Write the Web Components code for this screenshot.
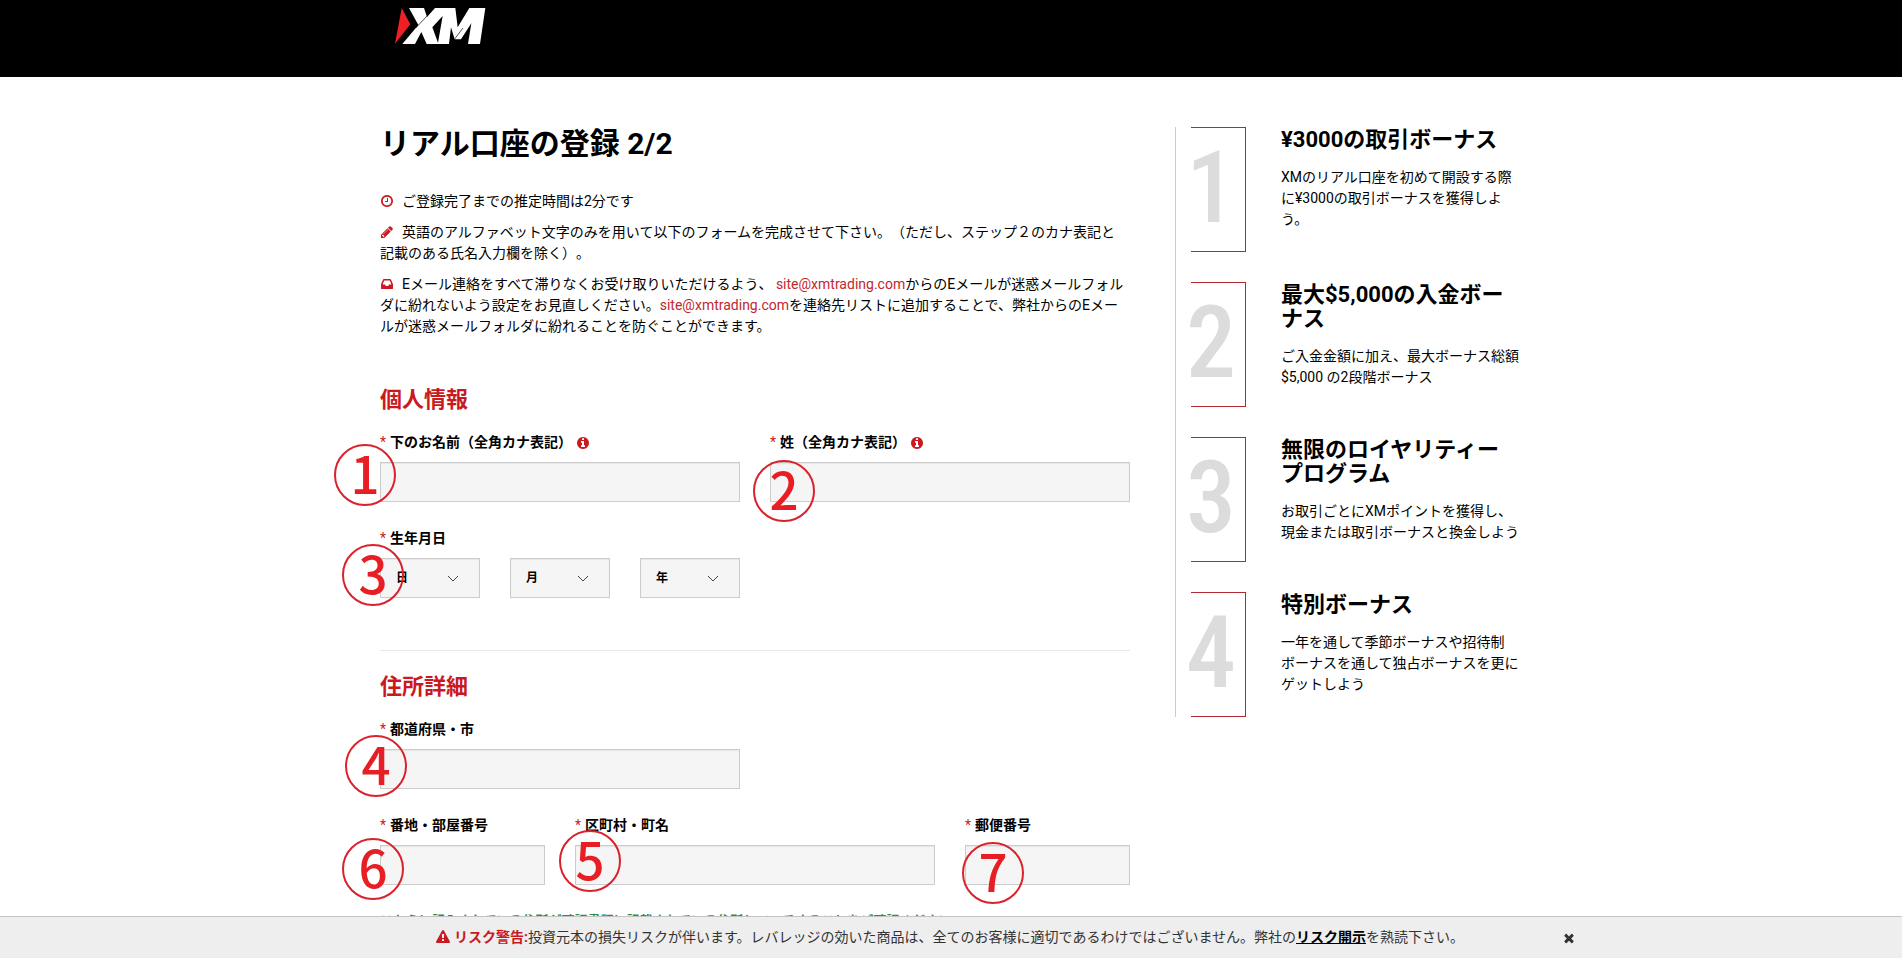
<!DOCTYPE html>
<html lang="ja">
<head>
<meta charset="utf-8">
<title>リアル口座の登録</title>
<style>
  body {
    margin: 0;
    background: #fff;
    color: #000;
    font: 14px/21px Roboto, "Noto Sans CJK JP", sans-serif;
    text-spacing-trim: space-all;
    line-break: strict;
  }
</style>
</head>
<body>
<xm-header></xm-header>
<xm-layout>
  <xm-intro></xm-intro>
  <xm-section heading="個人情報">
    <div class="row halves">
      <xm-field label="下のお名前（全角カナ表記）" info style="--mx:-46px;--my:13px" mark="1"></xm-field>
      <xm-field label="姓（全角カナ表記）" info style="--mx:-17px;--my:29px" mark="2"></xm-field>
    </div>
    <div class="row halves">
      <xm-birthdate style="--mx:-38px;--my:17px"></xm-birthdate>
    </div>
  </xm-section>
  <xm-section heading="住所詳細" divided>
    <div class="row halves">
      <xm-field label="都道府県・市" style="--mx:-35px;--my:17px" mark="4"></xm-field>
    </div>
    <div class="row address">
      <xm-field label="番地・部屋番号" style="--mx:-38px;--my:24px" mark="6"></xm-field>
      <xm-field label="区町村・町名" style="--mx:-16px;--my:16px" mark="5"></xm-field>
      <xm-field label="郵便番号" style="--mx:-3px;--my:28px" mark="7"></xm-field>
    </div>
    <p class="hint">こちらに記入されている住所が確認書類に記載されている住所とマッチすることをご確認ください</p>
  </xm-section>
  <xm-benefit slot="aside" number="1"><span slot="title">¥3000の取引ボーナス</span>XMのリアル口座を初めて開設する際に¥3000の取引ボーナスを獲得しよう。</xm-benefit>
  <xm-benefit slot="aside" number="2"><span slot="title">最大$5,000の入金ボーナス</span>ご入金金額に加え、最大ボーナス総額$5,000 の2段階ボーナス</xm-benefit>
  <xm-benefit slot="aside" number="3"><span slot="title">無限のロイヤリティープログラム</span>お取引ごとにXMポイントを獲得し、現金または取引ボーナスと換金しよう</xm-benefit>
  <xm-benefit slot="aside" number="4"><span slot="title">特別ボーナス</span>一年を通して季節ボーナスや招待制ボーナスを通して独占ボーナスを更にゲットしよう</xm-benefit>
</xm-layout>
<xm-risk-bar></xm-risk-bar>

<style>
  .row { display: grid; gap: 30px; margin-bottom: 25px; }
  .halves { grid-template-columns: 1fr 1fr; }
  .address { grid-template-columns: 165fr 360fr 165fr; }
  .hint { margin: 0; font-size: 13px; font-weight: 700; color: #2f8f46; }
</style>

<script>
const ICONS = {
  clock: 'M1024 544v448q0 14-9 23t-23 9h-320q-14 0-23-9t-9-23v-64q0-14 9-23t23-9h224v-352q0-14 9-23t23-9h64q14 0 23 9t9 23zm416 352q0-148-73-273t-198-198-273-73-273 73-198 198-73 273 73 273 198 198 273 73 273-73 198-198 73-273zm224 0q0 209-103 385.5t-279.5 279.5-385.5 103-385.5-103-279.5-279.5-103-385.5 103-385.5 279.5-279.5 385.5-103 385.5 103 279.5 279.5 103 385.5z',
  pencil: 'M491 1536l91-91-235-235-91 91v107h128v128h107zm523-928q0-22-22-22-10 0-17 7l-542 542q-7 7-7 17 0 22 22 22 10 0 17-7l542-542q7-7 7-17zm-54-192l416 416-832 832h-416v-416zm683 96q0 53-37 90l-166 166-416-416 166-165q36-38 90-38 53 0 91 38l235 234q37 39 37 91z',
  inbox: 'M1151 960h316q-1-3-2.5-8t-2.5-8l-212-496h-708l-212 496q-1 2-2.5 8t-2.5 8h316l95 192h320zm513 30v482q0 26-19 45t-45 19h-1408q-26 0-45-19t-19-45v-482q0-62 25-123l238-552q10-25 36.5-42t52.5-17h832q26 0 52.5 17t36.5 42l238 552q25 61 25 123z',
  info: 'M1152 1376v-160q0-14-9-23t-23-9h-96v-512q0-14-9-23t-23-9h-320q-14 0-23 9t-9 23v160q0 14 9 23t23 9h96v320h-96q-14 0-23 9t-9 23v160q0 14 9 23t23 9h448q14 0 23-9t9-23zm-128-896v-160q0-14-9-23t-23-9h-192q-14 0-23 9t-9 23v160q0 14 9 23t23 9h192q14 0 23-9t9-23zm640 416q0 209-103 385.5t-279.5 279.5-385.5 103-385.5-103-279.5-279.5-103-385.5 103-385.5 279.5-279.5 385.5-103 385.5 103 279.5 279.5 103 385.5z',
  warning: 'M1024 1375v-190q0-14-9.5-23.5t-22.5-9.5h-192q-13 0-22.5 9.5t-9.5 23.5v190q0 14 9.5 23.5t22.5 9.5h192q13 0 22.5-9.5t9.5-23.5zm-2-374l18-459q0-12-10-19-13-11-24-11h-220q-11 0-24 11-10 7-10 21l17 457q0 10 10 16.5t24 6.5h185q14 0 23.5-6.5t10.5-16.5zm-14-934l768 1408q35 63-2 126-17 29-46.5 46t-63.5 17h-1536q-34 0-63.5-17t-46.5-46q-37-63-2-126l768-1408q17-31 47-49t65-18 65 18 47 49z',
  close: 'M1490 1322q0 40-28 68l-136 136q-28 28-68 28t-68-28l-294-294-294 294q-28 28-68 28t-68-28l-136-136q-28-28-28-68t28-68l294-294-294-294q-28-28-28-68t28-68l136-136q28-28 68-28t68 28l294 294 294-294q28-28 68-28t68 28l136 136q28 28 28 68t-28 68l-294 294 294 294q28 28 28 68z'
};

class Base extends HTMLElement {
  constructor() { super(); this.attachShadow({ mode: 'open' }); }
  connectedCallback() { this.shadowRoot.innerHTML = this.render(); }
}

customElements.define('xm-icon', class extends Base {
  render() {
    return `<style>
      :host { display: inline-block; width: 14px; height: 14px; vertical-align: -2px; color: #cb1921; }
      svg { display: block; width: 100%; height: 100%; fill: currentColor; }
    </style><svg viewBox="0 0 1792 1792" aria-hidden="true"><path d="${ICONS[this.getAttribute('name')]}"/></svg>`;
  }
});

customElements.define('xm-header', class extends Base {
  render() {
    return `<style>
      :host { display: block; background: #000; }
      .inner { max-width: 1142px; height: 77px; margin: 0 auto; }
      a { display: inline-block; margin: 8px 0 0 15px; }
      svg { display: block; }
    </style>
    <div class="inner"><a href="#" aria-label="XM"><svg width="91" height="36" viewBox="0 0 273 108">
      <path fill="#ed2024" d="M20 0L46 49 0 107z"/>
      <path fill="#fff" fill-rule="evenodd" d="M42 0H87L96 27 120 0H181L188 58 223 0H271L255 108H219L229 46 198 94H179L168 58 162 108H95L79 72 60 108H22L70 51zM143 24L112 58 129 104z"/>
      <path fill="none" stroke="#000" stroke-width="2" d="M62 60L100 20M178 94L204 60"/>
    </svg></a></div>`;
  }
});

customElements.define('xm-layout', class extends Base {
  render() {
    return `<style>
      :host { display: flex; gap: 45px; max-width: 1142px; margin: 0 auto; padding-top: 50px; align-items: flex-start; }
      main { flex: 1; min-width: 0; }
      aside { flex: 0 0 347px; box-sizing: border-box; border-left: 1px solid #ccc; display: grid; gap: 30px; padding: 0 3px 0 15px; }
    </style><main><slot></slot></main><aside><slot name="aside"></slot></aside>`;
  }
});

customElements.define('xm-intro', class extends Base {
  render() {
    return `<style>
      :host { display: block; margin-bottom: 48px; }
      h1 { margin: 0 0 30px; font-size: 30px; line-height: 34px; font-weight: 700; }
      p { margin: 0 0 10px; }
      xm-icon { margin-right: 8px; }
      a { color: #c1272d; text-decoration: none; }
    </style>
    <h1>リアル口座の登録 2/2</h1>
    <p><xm-icon name="clock"></xm-icon>ご登録完了までの推定時間は2分です</p>
    <p><xm-icon name="pencil"></xm-icon>英語のアルファベット文字のみを用いて以下のフォームを完成させて下さい。（ただし、ステップ２のカナ表記と<br>記載のある氏名入力欄を除く）。</p>
    <p><xm-icon name="inbox"></xm-icon>Eメール連絡をすべて滞りなくお受け取りいただけるよう、 <a href="mailto:site@xmtrading.com">site@xmtrading.com</a>からのEメールが迷惑メールフォルダに紛れないよう設定をお見直しください。<a href="mailto:site@xmtrading.com">site@xmtrading.com</a>を連絡先リストに追加することで、弊社からのEメールが迷惑メールフォルダに紛れることを防ぐことができます。</p>`;
  }
});

customElements.define('xm-section', class extends Base {
  render() {
    return `<style>
      :host { display: block; }
      :host([divided]) { margin-top: 52px; border-top: 1px solid #e8e8e8; padding-top: 21px; }
      h2 { margin: 0 0 16px; font-size: 22px; line-height: 30px; font-weight: 700; color: #cb1921; }
    </style><h2>${this.getAttribute('heading')}</h2><slot></slot>`;
  }
});

customElements.define('xm-mark', class extends Base {
  render() {
    return `<style>
      :host { position: absolute; left: var(--mx); top: var(--my); box-sizing: border-box; width: 62px; height: 62px;
        border: 2px solid #d9222b; border-radius: 50%; text-align: center; pointer-events: none;
        font: 500 51px/52px "Noto Sans CJK JP", sans-serif; color: #e81e25; z-index: 1; }
    </style><slot></slot>`;
  }
});

const FIELD_CSS = `
  :host { display: block; position: relative; min-width: 0; }
  label, .label { display: flex; align-items: center; gap: 4px; padding-top: 1px; margin-bottom: 9px; font-weight: 700; }
  .req { color: #cb1921; font-weight: 400; }
  input, select { display: block; box-sizing: border-box; width: 100%; height: 40px; border: 1px solid #ccc; border-radius: 0;
    background-color: #f5f5f5; padding: 0 15px; font: 700 12px/18px Roboto, "Noto Sans CJK JP", sans-serif; color: #000; outline: 0; box-shadow: inset 0 1px 1px #e6e6e6; }
`;

customElements.define('xm-field', class extends Base {
  render() {
    const info = this.hasAttribute('info') ? '<xm-icon name="info"></xm-icon>' : '';
    return `<style>${FIELD_CSS}</style>
      <label for="control"><span class="req">*</span><span>${this.getAttribute('label')}</span>${info}</label>
      <input id="control" type="text">
      <xm-mark>${this.getAttribute('mark')}</xm-mark>`;
  }
});

customElements.define('xm-birthdate', class extends Base {
  render() {
    const pick = unit => `<span class="pick"><select aria-label="${unit}"><option>${unit}</option></select><svg width="12" height="7" viewBox="0 0 12 7" aria-hidden="true"><path d="M1 1l5 5 5-5" fill="none" stroke="#444"/></svg></span>`;
    return `<style>${FIELD_CSS}
      .picks { display: grid; grid-template-columns: repeat(3, 1fr); gap: 30px; }
      .pick { display: grid; align-items: center; }
      .pick > * { grid-area: 1 / 1; }
      .pick svg { justify-self: end; margin-right: 21px; pointer-events: none; }
      select { appearance: none; }
    </style>
    <div class="label"><span class="req">*</span><span>生年月日</span></div>
    <div class="picks">${pick('日')}${pick('月')}${pick('年')}</div>
    <xm-mark>3</xm-mark>`;
  }
});

customElements.define('xm-benefit', class extends Base {
  render() {
    return `<style>
      :host { display: grid; grid-template-columns: 55px 1fr; gap: 35px; }
      .number { box-sizing: border-box; height: 125px; border: solid #b02a30; border-width: 1px 1px 1px 0; padding-right: 14px;
        font: 500 100px/120px "Liberation Sans Narrow", "Roboto Condensed", Roboto, sans-serif; color: #dcdcdc; display: flex; justify-content: center; }
      h3 { margin: 0; padding: 1px 0 15px; font-size: 22px; line-height: 24px; font-weight: 700; }
      p { margin: 0; }
    </style>
    <div class="number">${this.getAttribute('number')}</div>
    <div><h3><slot name="title"></slot></h3><p><slot></slot></p></div>`;
  }
});

customElements.define('xm-risk-bar', class extends Base {
  render() {
    return `<style>
      :host { position: fixed; left: 0; right: 0; bottom: 0; z-index: 5; box-sizing: border-box; height: 42px; display: grid;
        grid-template-columns: 1fr auto 1fr; align-items: center; padding-right: 2px; background: #eee; border-top: 1px solid #c4c4c4; color: #333; }
      p { grid-column: 2; margin: 0; }
      b { color: #cb1921; }
      a { color: #000; font-weight: 700; }
      p xm-icon { margin-right: 4px; }
      button { justify-self: start; margin-left: 98px; padding: 0; border: 0; background: none; display: flex; }
      button xm-icon { color: #333; }
    </style>
    <p><xm-icon name="warning"></xm-icon><b>リスク警告:</b>投資元本の損失リスクが伴います。レバレッジの効いた商品は、全てのお客様に適切であるわけではございません。弊社の<a href="#">リスク開示</a>を熟読下さい。</p>
    <button type="button" aria-label="閉じる"><xm-icon name="close"></xm-icon></button>`;
  }
});
</script>
</body>
</html>
